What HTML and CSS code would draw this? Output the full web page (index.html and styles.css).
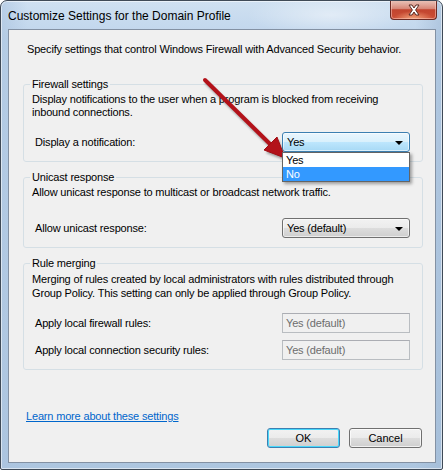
FILE: index.html
```html
<!DOCTYPE html>
<html>
<head>
<meta charset="utf-8">
<title>Customize Settings for the Domain Profile</title>
<link rel="stylesheet" href="styles.css">
</head>
<body>
<div class="window">
  <div class="titlebar">
    <span class="title">Customize Settings for the Domain Profile</span>
    <button class="close" aria-label="Close">
      <svg width="14" height="12" viewBox="0 0 14 12">
        <path d="M2 1 L5 1 L7 4 L9 1 L12 1 L8.6 6 L12 11 L9 11 L7 8 L5 11 L2 11 L5.4 6 Z" fill="#ffffff" stroke="#5a2a22" stroke-width="1" stroke-linejoin="round"/>
      </svg>
    </button>
  </div>
  <div class="client">
    <p class="intro">Specify settings that control Windows Firewall with Advanced Security behavior.</p>

    <fieldset class="group g1">
      <legend>Firewall settings</legend>
      <p class="desc">Display notifications to the user when a program is blocked from receiving<br>inbound connections.</p>
      <div class="row first">
        <span class="label">Display a notification:</span>
        <div class="combo-wrap">
          <div class="combo active"><span>Yes</span><i class="caret"></i></div>
          <ul class="dropdown">
            <li>Yes</li>
            <li class="sel">No</li>
          </ul>
        </div>
      </div>
    </fieldset>

    <fieldset class="group g2">
      <legend>Unicast response</legend>
      <p class="desc">Allow unicast response to multicast or broadcast network traffic.</p>
      <div class="row first">
        <span class="label">Allow unicast response:</span>
        <div class="combo"><span>Yes (default)</span><i class="caret"></i></div>
      </div>
    </fieldset>

    <fieldset class="group g3">
      <legend>Rule merging</legend>
      <p class="desc lh14">Merging of rules created by local administrators with rules distributed through<br>Group Policy. This setting can only be applied through Group Policy.</p>
      <div class="row first">
        <span class="label">Apply local firewall rules:</span>
        <div class="textbox">Yes (default)</div>
      </div>
      <div class="row second">
        <span class="label">Apply local connection security rules:</span>
        <div class="textbox">Yes (default)</div>
      </div>
    </fieldset>

    <a class="learn" href="#">Learn more about these settings</a>
    <div class="buttons">
      <button class="btn default">OK</button>
      <button class="btn">Cancel</button>
    </div>
  </div>

  <svg class="arrow" width="443" height="470" viewBox="0 0 443 470">
    <defs>
      <filter id="sh" x="-20%" y="-20%" width="140%" height="140%">
        <feGaussianBlur stdDeviation="1.2"/>
      </filter>
    </defs>
    <g transform="translate(2,3)" opacity="0.45" filter="url(#sh)">
      <line x1="205" y1="80" x2="271" y2="145" stroke="#404040" stroke-width="4" stroke-linecap="round"/>
      <polygon points="285,158 264,150 277,137" fill="#404040"/>
    </g>
    <line x1="205" y1="80" x2="271" y2="145" stroke="#b3121a" stroke-width="4" stroke-linecap="round"/>
    <polygon points="285,158 264,150 277,137" fill="#b3121a" stroke="#a00d14" stroke-width="1" stroke-linejoin="round"/>
  </svg>
</div>
</body>
</html>
```
FILE: styles.css
```css
* { box-sizing: border-box; }
html, body { margin: 0; padding: 0; background: #ffffff; }
body {
  font-family: "Liberation Sans", Arial, sans-serif;
  font-size: 11px;
  letter-spacing: -0.17px;
  color: #000;
}

.window {
  position: relative;
  width: 443px;
  height: 470px;
  border: 1px solid #3f4a57;
  border-radius: 7px 7px 2px 2px;
  background:
    radial-gradient(ellipse 120px 30px at 330px 14px, rgba(255,255,255,0.45), rgba(255,255,255,0) 70%),
    linear-gradient(90deg, rgba(170,195,222,0.6), rgba(255,255,255,0) 6%, rgba(255,255,255,0) 94%, rgba(160,185,212,0.6)),
    linear-gradient(180deg, #cfe0f1 0%, #bfd5ec 8%, #b6cde6 70%, #adc6e0 100%);
  box-shadow: inset 0 0 0 1px rgba(255,255,255,0.55);
  display: flex;
  flex-direction: column;
  overflow: hidden;
}

.titlebar {
  height: 28px;
  display: flex;
  align-items: flex-start;
  padding-left: 7px;
}
.title {
  font-size: 12px;
  letter-spacing: 0;
  line-height: 14px;
  margin-top: 8px;
  color: #000;
}
.close {
  margin-left: auto;
  margin-right: 5px;
  margin-top: -1px;
  width: 47px;
  height: 20px;
  padding: 0;
  border: 1px solid #6b2a23;
  border-top: none;
  border-radius: 0 0 4px 4px;
  background:
    linear-gradient(180deg, rgba(255,255,255,0.35) 0%, rgba(255,255,255,0.1) 48%, rgba(255,255,255,0) 50%),
    radial-gradient(ellipse 20px 8px at 50% 100%, #f2a27a, rgba(242,162,122,0) 100%),
    linear-gradient(180deg, #e0a797 0%, #d27766 45%, #c2452f 52%, #cc4f36 100%);
  box-shadow: inset 0 0 0 1px rgba(255,210,200,0.5);
  display: flex;
  align-items: center;
  justify-content: center;
}
.close svg { display: block; margin-top: 1px; }

.client {
  flex: 1;
  margin: 0 6px 6px 7px;
  border: 1px solid #8391a3;
  background: #f0f0f0;
  display: flex;
  flex-direction: column;
  padding: 12px 13px 0 14px;
}

.intro {
  margin: 0 0 0 4px;
  line-height: 14px;
}

.group {
  margin: 0;
  width: 400px;
  border: 1px solid #d5dfe5;
  border-radius: 3px;
  padding: 0 12px 9px 8px;
  min-width: 0;
}
.g1 { margin-top: 21px; }
.g2, .g3 { margin-top: 8px; }
.group legend {
  padding: 0 2px;
  margin-left: -2px;
  line-height: 14px;
  color: #000;
}
.desc {
  margin: 2px 0 0 0;
  line-height: 13px;
}
.desc.lh14 { line-height: 14px; }

.row {
  display: flex;
  align-items: center;
  justify-content: space-between;
  height: 20px;
}
.g1 .row.first { margin-top: 13px; }
.g2 .row.first { margin-top: 19px; }
.g3 .row.first { margin-top: 13px; }
.g3 .row.second { margin-top: 7px; }
.label { padding-left: 3px; }

.combo-wrap { position: relative; }
.combo {
  width: 128px;
  height: 20px;
  border: 1px solid #707070;
  border-radius: 3px;
  background: linear-gradient(180deg, #f2f2f2 0%, #ebebeb 50%, #dddddd 50%, #cfcfcf 100%);
  box-shadow: inset 0 0 0 1px rgba(255,255,255,0.6);
  display: flex;
  align-items: center;
  padding-left: 4px;
  position: relative;
}
.combo.active {
  border-color: #3c7fb1;
  background: linear-gradient(180deg, #eaf6fd 0%, #d9f0fc 50%, #bee6fd 50%, #a7d9f5 100%);
}
.caret {
  margin-left: auto;
  margin-right: 6px;
  width: 0; height: 0;
  border-left: 4px solid transparent;
  border-right: 4px solid transparent;
  border-top: 4px solid #000;
  margin-top: 1px;
}

.dropdown {
  position: absolute;
  left: 0;
  top: 20px;
  width: 128px;
  margin: 0;
  padding: 0;
  list-style: none;
  background: #fff;
  border: 1px solid #646464;
  box-shadow: 2px 2px 3px rgba(0,0,0,0.35);
  z-index: 2;
}
.dropdown li {
  height: 14px;
  line-height: 14px;
  padding-left: 3px;
}
.dropdown li.sel {
  background: #3399ff;
  color: #fff;
}

.textbox {
  width: 128px;
  height: 20px;
  border: 1px solid #b9bdc1;
  border-top-color: #abadb3;
  background: #f0f0f0;
  color: #6d6d6d;
  padding-left: 3px;
  line-height: 18px;
}

.learn {
  margin-top: 39px;
  margin-left: 3px;
  line-height: 14px;
  color: #0066cc;
  text-decoration: underline;
  align-self: flex-start;
}

.buttons {
  display: flex;
  justify-content: flex-end;
  gap: 9px;
  margin-top: 5px;
  padding-right: 0;
}
.btn {
  width: 73px;
  height: 20px;
  padding: 0;
  font: inherit;
  color: #000;
  border: 1px solid #707070;
  border-radius: 3px;
  background: linear-gradient(180deg, #f2f2f2 0%, #ebebeb 50%, #dddddd 50%, #cfcfcf 100%);
  box-shadow: inset 0 0 0 1px rgba(255,255,255,0.7);
}
.btn.default {
  border-color: #3c7fb1;
  box-shadow: inset 0 0 0 1px #48d8fb;
}

.arrow {
  position: absolute;
  left: -1px;
  top: -1px;
  pointer-events: none;
}
```
